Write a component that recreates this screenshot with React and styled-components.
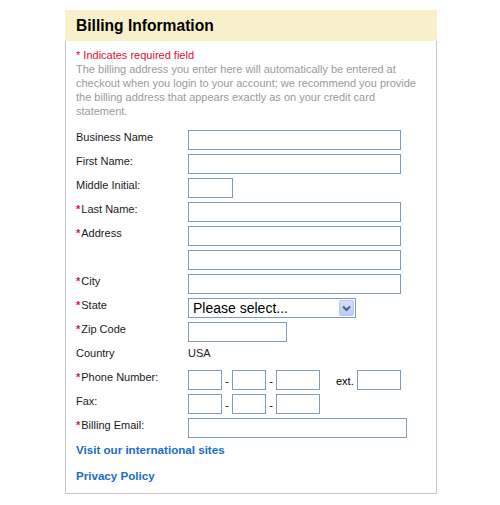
import React from "react";
import styled, { createGlobalStyle } from "styled-components";

const GlobalStyle = createGlobalStyle`
  body {
    margin: 0;
    background: #ffffff;
    font-family: "Liberation Sans", Arial, sans-serif;
  }
`;

const Panel = styled.div`
  width: 372px;
  margin: 10px 0 0 65px;
`;

const Header = styled.div`
  height: 31px;
  background: #f8efcb;
  padding-left: 11px;
`;

const Title = styled.h2`
  margin: 0;
  font-size: 15.6px;
  line-height: 31px;
  font-weight: bold;
  color: #000;
`;

const Body = styled.div`
  border: 1px solid #c8c8c8;
  border-top: none;
  padding: 7px 10px 11px 10px;
  height: 453px;
  box-sizing: border-box;
`;

const Required = styled.div`
  color: #dd1030;
  font-size: 11px;
  line-height: 14px;
`;

const Note = styled.p`
  margin: 0 0 12px 0;
  color: #9a9a9a;
  font-size: 11px;
  line-height: 14px;
`;

const FormGrid = styled.div`
  display: grid;
  grid-template-columns: 112px 1fr;
  grid-auto-rows: 20px;
  row-gap: 4px;
`;

const Label = styled.label`
  font-size: 11px;
  line-height: 14px;
  color: #1a1a1a;
`;

const Star = styled.span`
  color: #dd1030;
  font-weight: bold;
  margin-right: 1px;
`;

const Field = styled.div`
  display: flex;
  align-items: center;
`;

const Input = styled.input`
  box-sizing: border-box;
  width: ${(p) => p.$w}px;
  height: 20px;
  border: 1px solid #7f9db9;
  margin: 0;
  padding: 1px 3px;
  font-size: 12px;
  font-family: inherit;
  background: #fff;
  outline: none;
`;

const Dash = styled.span`
  width: 10px;
  text-align: center;
  font-size: 11px;
  line-height: 14px;
  margin-top: 2px;
`;

const Ext = styled.span`
  font-size: 11px;
  line-height: 14px;
  margin: 2px 3px 0 16px;
`;

const Value = styled.span`
  font-size: 11px;
  line-height: 14px;
  color: #1a1a1a;
  align-self: flex-start;
`;

const SelectBox = styled.div`
  box-sizing: border-box;
  width: 168px;
  height: 20px;
  border: 1px solid #7f9db9;
  display: flex;
  align-items: stretch;
  padding: 1px;
  background: #fff;
`;

const Select = styled.select`
  flex: 1;
  border: none;
  appearance: none;
  background: transparent;
  font-family: inherit;
  font-size: 14px;
  padding: 0 0 0 3px;
  margin: 0;
  color: #000;
  outline: none;
`;

const ArrowBox = styled.div`
  width: 15px;
  box-sizing: border-box;
  border: 1px solid #b6c8f0;
  border-radius: 2px;
  background: linear-gradient(#d5e1fc, #b6cbf8);
  display: flex;
  align-items: center;
  justify-content: center;
`;

const Links = styled.div`
  display: flex;
  flex-direction: column;
  gap: 12px;
  margin-top: 5px;
`;

const Link = styled.a`
  color: #1a6dc8;
  font-weight: bold;
  font-size: 11.6px;
  line-height: 14px;
  text-decoration: none;
`;

const Req = ({ children }) => (
  <Label>
    <Star>*</Star>
    {children}
  </Label>
);

export default function App() {
  return (
    <>
      <GlobalStyle />
      <Panel>
        <Header>
          <Title>Billing Information</Title>
        </Header>
        <Body>
          <Required>* Indicates required field</Required>
          <Note>
            The billing address you enter here will automatically be entered at
            checkout when you login to your account; we recommend you provide
            the billing address that appears exactly as on your credit card
            statement.
          </Note>
          <FormGrid>
            <Label>Business Name</Label>
            <Field>
              <Input $w={213} />
            </Field>
            <Label>First Name:</Label>
            <Field>
              <Input $w={213} />
            </Field>
            <Label>Middle Initial:</Label>
            <Field>
              <Input $w={45} />
            </Field>
            <Req>Last Name:</Req>
            <Field>
              <Input $w={213} />
            </Field>
            <Req>Address</Req>
            <Field>
              <Input $w={213} />
            </Field>
            <Label />
            <Field>
              <Input $w={213} />
            </Field>
            <Req>City</Req>
            <Field>
              <Input $w={213} />
            </Field>
            <Req>State</Req>
            <Field>
              <SelectBox>
                <Select defaultValue="">
                  <option value="">Please select...</option>
                </Select>
                <ArrowBox>
                  <svg width="9" height="7" viewBox="0 0 9 7">
                    <path
                      d="M1 1.5 L4.5 5 L8 1.5"
                      fill="none"
                      stroke="#4b5f86"
                      strokeWidth="2"
                    />
                  </svg>
                </ArrowBox>
              </SelectBox>
            </Field>
            <Req>Zip Code</Req>
            <Field>
              <Input $w={99} />
            </Field>
            <Label>Country</Label>
            <Field>
              <Value>USA</Value>
            </Field>
            <Req>Phone Number:</Req>
            <Field>
              <Input $w={34} />
              <Dash>-</Dash>
              <Input $w={34} />
              <Dash>-</Dash>
              <Input $w={44} />
              <Ext>ext.</Ext>
              <Input $w={44} />
            </Field>
            <Label>Fax:</Label>
            <Field>
              <Input $w={34} />
              <Dash>-</Dash>
              <Input $w={34} />
              <Dash>-</Dash>
              <Input $w={44} />
            </Field>
            <Req>Billing Email:</Req>
            <Field>
              <Input $w={219} />
            </Field>
          </FormGrid>
          <Links>
            <Link href="#">Visit our international sites</Link>
            <Link href="#">Privacy Policy</Link>
          </Links>
        </Body>
      </Panel>
    </>
  );
}
